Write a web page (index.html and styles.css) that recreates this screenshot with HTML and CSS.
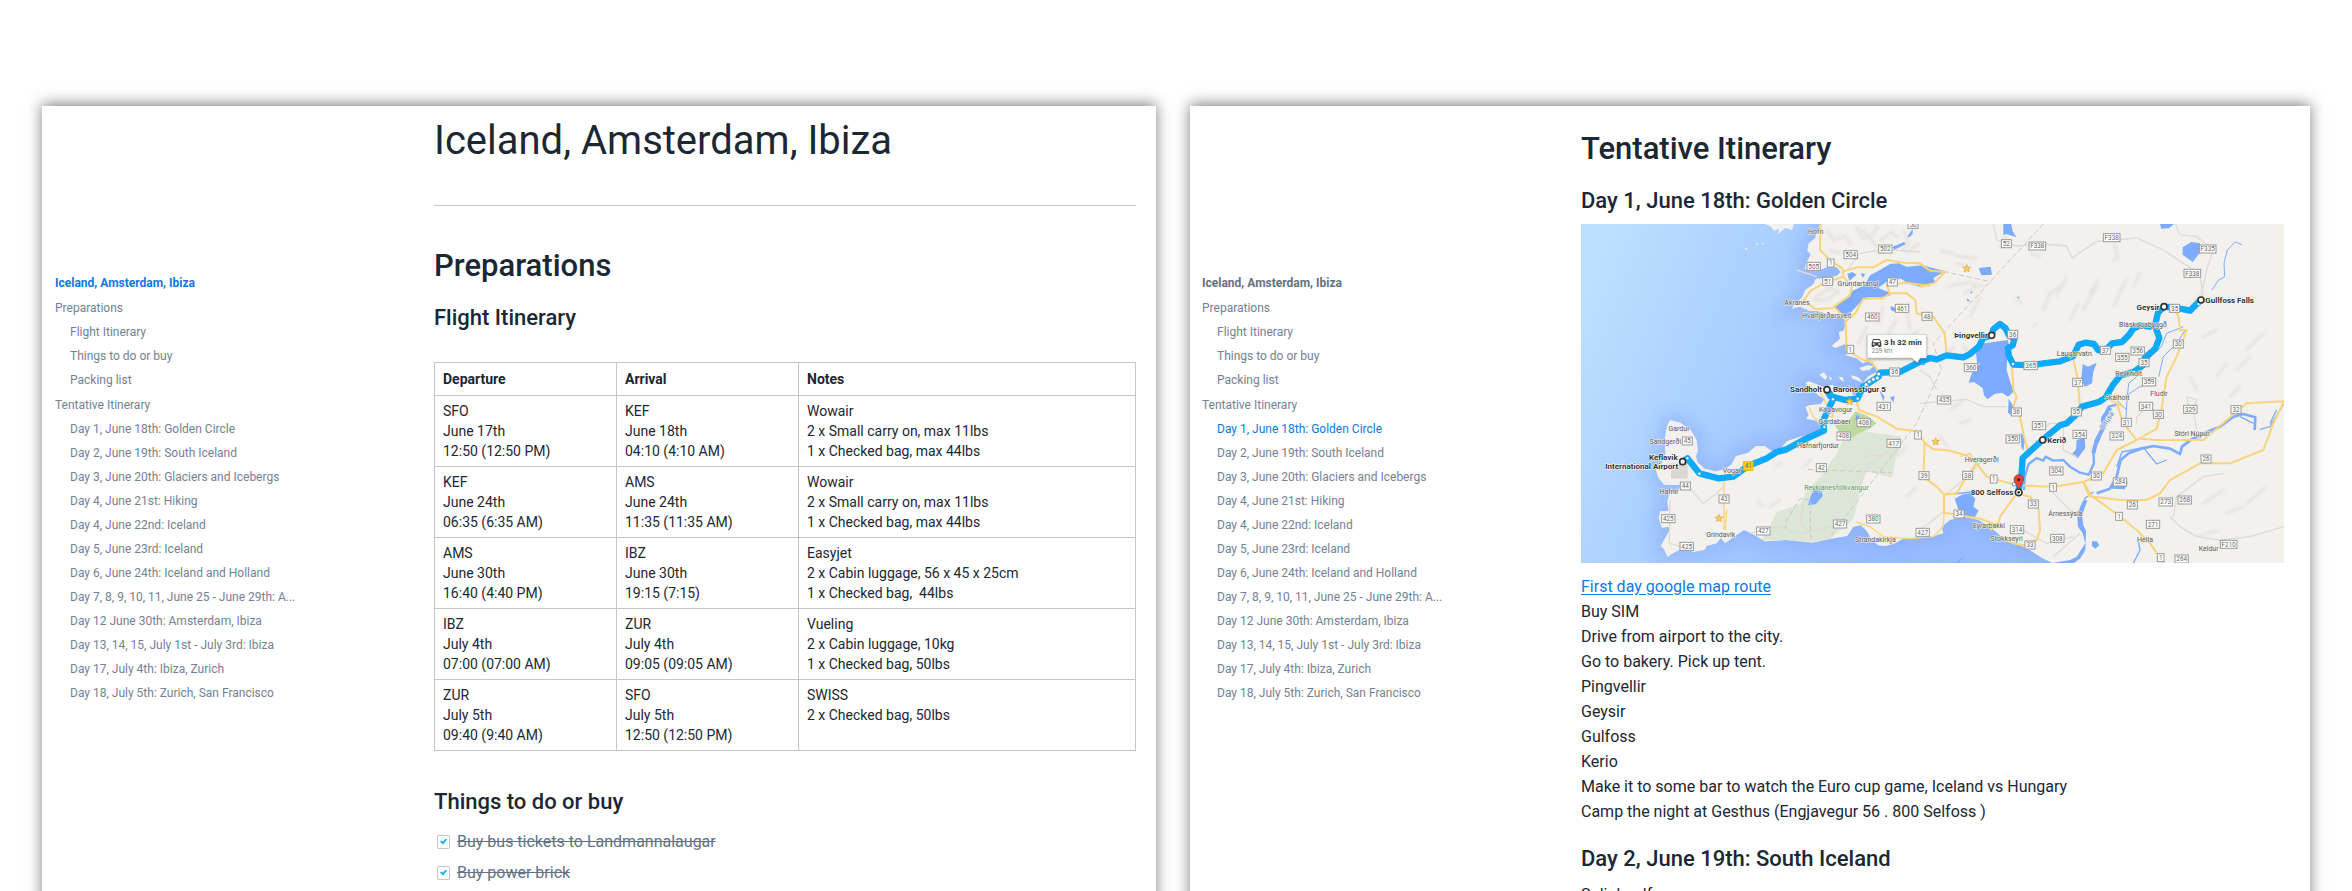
FILE: index.html
```
<!DOCTYPE html>
<html lang="en">
<head>
<meta charset="utf-8">
<meta name="viewport" content="width=device-width, initial-scale=1">
<title>Iceland, Amsterdam, Ibiza</title>
<link rel="stylesheet" href="styles.css">
</head>
<body>
<main class="spread">
  <section class="sheet">
    <nav class="toc" aria-label="Outline of the trip">
      <a class="toc-link toc-title is-active" href="#trip">Iceland, Amsterdam, Ibiza</a>
      <a class="toc-link" href="#preparations">Preparations</a>
      <a class="toc-link toc-sub" href="#flights">Flight Itinerary</a>
      <a class="toc-link toc-sub" href="#todo">Things to do or buy</a>
      <a class="toc-link toc-sub" href="#packing">Packing list</a>
      <a class="toc-link" href="#itinerary">Tentative Itinerary</a>
      <a class="toc-link toc-sub" href="#day1">Day 1, June 18th: Golden Circle</a>
      <a class="toc-link toc-sub" href="#day2">Day 2, June 19th: South Iceland</a>
      <a class="toc-link toc-sub" href="#day3">Day 3, June 20th: Glaciers and Icebergs</a>
      <a class="toc-link toc-sub" href="#day4">Day 4, June 21st: Hiking</a>
      <a class="toc-link toc-sub" href="#day4b">Day 4, June 22nd: Iceland</a>
      <a class="toc-link toc-sub" href="#day5">Day 5, June 23rd: Iceland</a>
      <a class="toc-link toc-sub" href="#day6">Day 6, June 24th: Iceland and Holland</a>
      <a class="toc-link toc-sub" href="#day7">Day 7, 8, 9, 10, 11, June 25 - June 29th: A...</a>
      <a class="toc-link toc-sub" href="#day12">Day 12 June 30th: Amsterdam, Ibiza</a>
      <a class="toc-link toc-sub" href="#day13">Day 13, 14, 15, July 1st - July 3rd: Ibiza</a>
      <a class="toc-link toc-sub" href="#day17">Day 17, July 4th: Ibiza, Zurich</a>
      <a class="toc-link toc-sub" href="#day18">Day 18, July 5th: Zurich, San Francisco</a>
    </nav>
    <article class="doc doc-start">
      <h1 class="doc-title" id="trip">Iceland, Amsterdam, Ibiza</h1>
      <hr class="rule">
      <h2 class="section-title" id="preparations">Preparations</h2>
      <h3 class="sub-title" id="flights">Flight Itinerary</h3>
      <table class="flights">
        <colgroup><col class="col-leg"><col class="col-leg"><col></colgroup>
        <thead>
          <tr><th scope="col">Departure</th><th scope="col">Arrival</th><th scope="col">Notes</th></tr>
        </thead>
        <tbody>
          <tr><td>SFO<br>June 17th<br>12:50 (12:50 PM)</td><td>KEF<br>June 18th<br>04:10 (4:10 AM)</td><td>Wowair<br>2 x Small carry on, max 11lbs<br>1 x Checked bag, max 44lbs</td></tr>
          <tr><td>KEF<br>June 24th<br>06:35 (6:35 AM)</td><td>AMS<br>June 24th<br>11:35 (11:35 AM)</td><td>Wowair<br>2 x Small carry on, max 11lbs<br>1 x Checked bag, max 44lbs</td></tr>
          <tr><td>AMS<br>June 30th<br>16:40 (4:40 PM)</td><td>IBZ<br>June 30th<br>19:15 (7:15)</td><td>Easyjet<br>2 x Cabin luggage, 56 x 45 x 25cm<br>1 x Checked bag, &nbsp;44lbs</td></tr>
          <tr><td>IBZ<br>July 4th<br>07:00 (07:00 AM)</td><td>ZUR<br>July 4th<br>09:05 (09:05 AM)</td><td>Vueling<br>2 x Cabin luggage, 10kg<br>1 x Checked bag, 50lbs</td></tr>
          <tr><td>ZUR<br>July 5th<br>09:40 (9:40 AM)</td><td>SFO<br>July 5th<br>12:50 (12:50 PM)</td><td>SWISS<br>2 x Checked bag, 50lbs</td></tr>
        </tbody>
      </table>
      <h3 class="sub-title todo-title" id="todo">Things to do or buy</h3>
      <ul class="todo">
        <li><label class="task"><input class="task-box" type="checkbox" checked><span class="task-text">Buy bus tickets to Landmannalaugar</span></label></li>
        <li><label class="task"><input class="task-box" type="checkbox" checked><span class="task-text">Buy power brick</span></label></li>
      </ul>
    </article>
  </section>

  <section class="sheet">
    <nav class="toc toc-day" aria-label="Outline of the trip, day 1">
      <a class="toc-link toc-title" href="#trip">Iceland, Amsterdam, Ibiza</a>
      <a class="toc-link" href="#preparations">Preparations</a>
      <a class="toc-link toc-sub" href="#flights">Flight Itinerary</a>
      <a class="toc-link toc-sub" href="#todo">Things to do or buy</a>
      <a class="toc-link toc-sub" href="#packing">Packing list</a>
      <a class="toc-link" href="#itinerary">Tentative Itinerary</a>
      <a class="toc-link toc-sub is-active" href="#day1">Day 1, June 18th: Golden Circle</a>
      <a class="toc-link toc-sub" href="#day2">Day 2, June 19th: South Iceland</a>
      <a class="toc-link toc-sub" href="#day3">Day 3, June 20th: Glaciers and Icebergs</a>
      <a class="toc-link toc-sub" href="#day4">Day 4, June 21st: Hiking</a>
      <a class="toc-link toc-sub" href="#day4b">Day 4, June 22nd: Iceland</a>
      <a class="toc-link toc-sub" href="#day5">Day 5, June 23rd: Iceland</a>
      <a class="toc-link toc-sub" href="#day6">Day 6, June 24th: Iceland and Holland</a>
      <a class="toc-link toc-sub" href="#day7">Day 7, 8, 9, 10, 11, June 25 - June 29th: A...</a>
      <a class="toc-link toc-sub" href="#day12">Day 12 June 30th: Amsterdam, Ibiza</a>
      <a class="toc-link toc-sub" href="#day13">Day 13, 14, 15, July 1st - July 3rd: Ibiza</a>
      <a class="toc-link toc-sub" href="#day17">Day 17, July 4th: Ibiza, Zurich</a>
      <a class="toc-link toc-sub" href="#day18">Day 18, July 5th: Zurich, San Francisco</a>
    </nav>
    <article class="doc doc-day">
      <h2 class="section-title" id="itinerary">Tentative Itinerary</h2>
      <h3 class="sub-title" id="day1">Day 1, June 18th: Golden Circle</h3>
      <svg class="map" viewBox="33 42 2109 1017" role="img" aria-label="Driving route of the Golden Circle">
        <defs>
          <linearGradient id="sea" gradientUnits="userSpaceOnUse" x1="33" y1="300" x2="1000" y2="700">
            <stop offset="0" stop-color="#bbdfff"/><stop offset="0.35" stop-color="#aed2ff"/><stop offset="1" stop-color="#97bbff"/>
          </linearGradient>
          <filter id="shelf" x="-10%" y="-10%" width="120%" height="120%"><feGaussianBlur stdDeviation="26"/></filter>
          <filter id="relief" x="0" y="0" width="100%" height="100%"><feGaussianBlur stdDeviation="4"/></filter>
          <path id="coast" d="M752 42L738 66L736 84L716 100L712 122L722 134L708 160L704 178L712 180L745 182L770 172L800 172L812 186L800 198L760 204L738 206L728 224L706 240L696 262L664 296L690 290L716 302L744 304L780 314L816 322L828 336L820 362L806 366L810 386L784 408L796 414L826 402L832 424L828 436L862 446L878 460L896 452L918 474L926 484L896 498L880 516L890 530L872 548L850 556L838 534L806 548L788 524L760 530L716 514L706 520L726 536L744 556L764 568L752 582L716 586L706 592L716 614L708 626L738 632L760 656L724 672L690 680L650 694L640 706L620 724L604 722L584 708L558 708L534 728L498 738L484 764L462 778L436 784L404 776L382 756L378 738L384 724L380 690L364 662L332 638L300 630L290 650L284 690L286 730L272 768L258 780L264 802L282 824L332 826L322 848L298 850L292 876L296 902L270 904L266 926L276 954L296 950L298 962L272 1008L282 1018L292 1040L316 1026L340 1014L370 1026L404 1020L410 1008L440 1000L452 984L466 1000L492 980L522 960L548 972L584 994L650 990L726 998L776 988L832 978L850 950L872 946L890 962L902 984L924 1006L946 1008L976 1000L998 986L1050 982L1086 980L1120 970L1115 950L1140 930L1180 920L1225 930L1260 950L1300 985L1340 1003L1370 1014L1416 1044L1450 1060H2142V42Z"/>
          <clipPath id="land-clip"><use href="#coast"/></clipPath>
          <path id="drive" d="M338 755L352 745L388 790L446 805L490 800L534 768L590 745L620 726L650 718L700 690L762 662L760 630L790 566L771 539L780 558L825 570L862 566L880 530L926 500L930 488L990 486L1040 460L1080 444L1100 448L1130 436L1180 442L1200 432L1226 410L1240 384L1265 376L1270 358L1290 342L1306 354L1318 378L1334 384L1328 406L1314 414L1316 436L1330 464L1386 466L1420 460L1470 454L1510 438L1526 404L1546 398L1572 402L1584 420L1606 422L1626 400L1656 396L1676 376L1690 356L1710 346L1740 350L1756 342L1764 308L1782 290L1820 294L1860 302L1892 270M1756 350L1768 384L1756 416L1724 444L1722 464L1690 486L1652 496L1628 526L1606 564L1586 576L1536 590L1516 616L1490 640L1470 646L1436 674L1418 690L1358 744L1354 800L1346 838"/>
        </defs>
        <rect x="33" y="42" width="2109" height="1017" fill="url(#sea)"/>
        <use href="#coast" fill="#8aaefa" stroke="#8aaefa" stroke-width="44" opacity=".6" filter="url(#shelf)"/>
        <use href="#coast" fill="#f2f1ee"/>
        <g fill="#f2f1ee">
          <path d="M586 42L602 50L612 62L628 56L622 74L646 54L666 60L672 42Z"/>
          <path d="M521 112l12 4-2 5zM556 100l8 2-3 5zM574 98l9 0-4 6z"/>
          <path d="M748 494l14-7 10 14-6 8zM776 498l10 6-4 8zM806 500l12 2 4 14-10-6zM845 496l20 6 14 16-16-6-18-8zM868 474l24-8 20 2-14 12-22 2z"/>
        </g>

        <!-- hill shading -->
        <g clip-path="url(#land-clip)" fill="none" stroke="#e2e0dc" stroke-width="7" stroke-linecap="round" filter="url(#relief)">
          <path d="M770 60l20 30 34-12 20 24M860 50l18 36 30-10 16-30M930 92l34-26 20 16M780 120l30 10M1000 60l16 40-20 24M1010 130l36-30M880 60l40 50M750 250l30-14 26 8-30 24-36 4M730 270l50-40M940 290l-16 50M980 330l-30 50M1010 300l10 60M890 350l-24 50M1044 360l-20 20"/>
          <path d="M1110 120l60 20 50 4M1130 230l60-12 50 10M1180 250l40-20M1290 110l20-36M1380 130l30 10M1420 300l20-50 30-20M1460 260l30-60M1500 330l26-50M1540 300l40-70M1560 250l24-40M1630 290l40-80M1650 240l20-30M1690 230l20-40M1634 100l8 40M1630 150l14-8M1390 350l12-10M1340 270l16 10M1160 160l40 10M1200 320l30-60M1180 410l20 20M1110 460l40-50M1140 600l40-30M1170 640l30-10M1110 680l24 30M1860 290l40-40M1900 380l40-20M1940 500l30-40M2000 480l40-40M1980 560l30-30M2030 420l50-50M1860 500l20 40"/>
          <path d="M560 870l20 20M600 890l30-20M700 770l24-20M900 770l30-30M1010 860l30-30M620 770l14-14M860 580l20-20M980 740l30-30M1900 880l60-40M1970 910l50-20M2030 880l60-50M1880 980l70-20M1780 880l30-20"/>
        </g>

        <!-- parks -->
        <path fill="#dce6d6" d="M574 990L592 962L620 906L692 882L706 850L760 790L800 730L826 676L880 664L994 680L978 742L966 804L886 782L858 900L848 930L782 986L720 996L650 990Z"/>
        <path fill="#bedaa0" d="M794 646L830 640L856 604L890 616L920 640L902 654L862 672L838 690L812 672Z"/>
        <rect x="303" y="760" width="50" height="46" fill="#ddd5cf"/>

        <!-- lakes and rivers -->
        <g fill="#7dabff">
          <path d="M790 292L824 268L848 242L884 226L900 196L930 180L960 162L986 160L1010 170L1060 166L1080 172L1112 180L1125 184L1090 204L1096 220L1050 230L1010 218L994 206L960 208L924 234L956 246L962 256L930 262L892 262L866 282L846 304L826 326L818 312Z"/>
          <path d="M832 192l14-6 14 8-12 10-10 8zM872 190l6 14 8-12z"/>
          <path d="M1230 402L1314 390L1318 416L1312 436L1310 480L1322 520L1332 544L1314 560L1296 548L1274 552L1252 568L1242 556L1238 534L1212 516L1196 518L1206 488L1222 466L1218 430Z"/>
          <path d="M1300 42h24l4 22 12 18-30-10-10 2zM1226 174l36-4 4 24-32 2zM1838 112l26-16 26 4-2 30-20 26-20-14-10-8zM1770 42h42l-14 12-24 2zM1538 462l16 8 26-12-10 28-4 34-22 10-10-24z"/>
          <path d="M1154 866L1176 854L1200 850L1216 866L1210 890L1226 902L1214 922L1190 922L1164 896Z"/>
          <path d="M730 840L752 832L758 858L738 882L714 886L722 860Z"/>
          <path d="M1520 690l24-6 2 30-22 30-20-10 14-16zM1566 994l14 0 8 12-12 10-10-8zM1640 806l34 10-10 22-40-2zM1316 566l14 22-2 30-14-10zM1352 668l14 14-6 40-6-10z"/>
          <path d="M962 288l16 6-2 12-14-6zM858 616l10 2-2 14-10-2zM928 540l16 20-4 14zM968 110l34-14 6 6-36 18zM1012 80l16-24 0 16-10 10zM960 562l14-4-4 20zM1340 260l8 0-2 8zM1190 264l12 10-10 0zM1200 246l8-2-4 8zM1056 458l12 4-10 6z"/>
          <path d="M1442 1060L1500 1050L1520 1040L1546 1000L1538 970L1524 950L1522 920L1530 890L1542 868L1552 872L1536 916L1540 946L1548 962L1546 1020L1530 1046L1510 1060Z"/>
        </g>
        <g fill="none" stroke="#7dabff" stroke-width="7" stroke-linejoin="round">
          <path d="M1362 840L1364 800L1376 762L1400 744L1420 752L1426 740L1450 752L1480 750L1500 770L1530 788L1556 794L1572 760L1570 720L1586 690L1600 650L1596 630L1616 590L1640 584"/>
          <path stroke-width="12" d="M1570 730L1580 690L1602 650L1600 622L1622 594"/>
          <path stroke-width="3" d="M1674 660L1668 620L1672 560L1676 520L1700 500L1742 440L1774 410L1790 370L1840 350M1664 560L1710 530L1750 520M1766 500L1780 440L1820 400L1846 360M1926 240L1944 212L1964 200L1962 160L1972 120L1996 96L2016 104M1670 600L1620 550L1600 560"/>
          <path stroke-width="8" d="M1580 850L1620 836L1640 800L1652 750L1676 730L1714 716L1750 708L1800 716L1830 732L1836 710L1862 690L1910 666L1950 650L1990 620L2020 612L2056 622L2054 660"/>
          <path stroke-width="4" d="M1640 770L1656 726L1720 712L1760 762L1790 750M2070 658L2100 650L2142 580M1690 1060L1710 1020L1704 990M2010 620L2050 640M1180 1042L1160 1060M1152 852L1204 846M1542 868L1570 846M2100 640L2120 600"/>
        </g>

        <!-- district borders -->
        <g fill="none" stroke="#cbc9c5" stroke-width="3" stroke-dasharray="16 8">
          <path d="M1420 42L1090 400L1114 478L1040 640L780 980M1120 184L1264 216M714 778L966 788M646 960L650 930L690 866L722 870V996"/>
        </g>

        <!-- minor roads -->
        <g fill="none" stroke="#dedbd5" stroke-width="4">
          <path d="M1270 42L1280 90L1340 108L1420 102L1490 108L1506 144L1580 94L1700 84L1780 120L1840 160L1890 190L1900 270M1816 42L1830 74L1880 80L1930 120L1910 180L1894 250M830 182L870 130L940 118L1050 126M1050 580L1190 568L1240 590L1310 590M1200 480L1230 460M346 820L400 880L440 850L460 830M300 870L298 1000L370 1020M1120 860L1190 800L1230 760M1120 906L1050 960M540 970L620 950L700 970L830 940M860 840L900 760L960 720M700 880L690 940L720 970M1410 660L1440 640M1440 640L1480 640L1480 720L1520 740M1440 820L1440 840L1500 900L1530 920M1340 950L1430 1000L1510 980M1450 1040L1530 970M1700 640L1700 620L1740 580M1860 600L1850 560L1880 570L1870 600L1880 660M1800 920L1830 950L1880 980L1950 990L2040 980L2142 950M1810 920L1820 860L1900 800L1960 790M1050 480L1080 500L1100 540M880 740L980 730L1000 690M680 180L740 200"/>
        </g>

        <!-- main roads -->
        <g fill="none" stroke="#fbd37c" stroke-width="6" stroke-linejoin="round">
          <path d="M752 42L750 120L780 150L818 176L820 200L846 230L840 256L792 290L826 326L830 420L880 450L906 456L926 486M820 184L860 172L910 172L950 150L1000 158L1050 160L1080 182M820 200L760 220L720 244L702 270L736 298L790 294M826 336L856 310L880 266L940 264L960 250L1010 250L1036 270L1040 310L1070 320M960 250L950 225L1010 218L1080 228M1080 182L1125 186L1092 220L1050 230M1050 310L1090 320L1124 370L1130 436"/>
          <path d="M860 570L866 600L920 620L980 656L1040 664L1066 700L1090 718L1130 720L1190 736L1220 760L1250 800L1270 806L1340 826L1450 830L1540 816L1554 850L1610 890L1650 920L1700 960L1740 1000L1784 1060"/>
          <path d="M1064 700L1060 800L1100 830L1122 854L1122 908L1170 916L1230 926L1284 946L1260 960M1122 854L1160 850L1190 800L1220 760M1284 946L1290 920L1340 850L1380 860L1406 900L1410 960L1400 990L1360 1006L1330 1000L1284 980"/>
          <path d="M1326 460L1330 540L1340 560L1330 590L1350 620L1362 680L1380 740M1508 440L1522 500L1530 590M1540 816L1600 790L1640 720L1700 690L1760 656L1774 600L1790 500L1820 440L1850 360L1830 360L1826 320L1810 290M1640 580L1660 640L1700 690M1710 686L1760 690L1900 690L2030 580L2142 574M1554 858L1650 870L1730 870L1770 850L1800 810L1890 760L1980 760L2080 720L2110 640L2142 574M1540 816L1560 850M1600 560L1660 590"/>
          <path stroke-width="4" d="M462 810L462 960M470 900L466 960M860 936L900 950L940 980L1020 986L1090 980L1120 950L1122 908M782 590L790 620L760 620M716 590L730 620L760 650M770 540L740 530M750 546L790 620M872 560L920 490M1170 740L1200 730L1210 750"/>
        </g>

        <!-- driving route -->
        <g fill="none" stroke-linejoin="round" stroke-linecap="round">
          <use href="#drive" class="route-edge"/>
          <use href="#drive" class="route-core"/>
        </g>
        <g fill="#fff" stroke="#3a9fe0" stroke-width="3">
          <circle cx="352" cy="745" r="5"/><circle cx="388" cy="791" r="5"/><circle cx="763" cy="651" r="5"/><circle cx="762" cy="630" r="5"/><circle cx="789" cy="568" r="5"/><circle cx="863" cy="566" r="5"/><circle cx="888" cy="524" r="6"/><circle cx="898" cy="515" r="6"/><circle cx="910" cy="508" r="6"/><circle cx="922" cy="504" r="6"/><circle cx="926" cy="492" r="6"/><circle cx="1329" cy="462" r="5"/><circle cx="1692" cy="486" r="5"/><circle cx="1886" cy="282" r="5"/><circle cx="1333" cy="822" r="6"/>
        </g>

        <g id="map-stars"></g>
        <g id="map-shields"></g>
        <g id="map-places"></g>

        <!-- stops -->
        <g fill="#fff" stroke="#333" stroke-width="5">
          <circle cx="338" cy="755" r="9"/><circle cx="771" cy="539" r="9"/><circle cx="1265" cy="376" r="9"/><circle cx="1782" cy="290" r="9"/><circle cx="1893" cy="270" r="9"/><circle cx="1418" cy="690" r="9"/><circle cx="1346" cy="847" r="10"/>
        </g>
        <circle cx="1346" cy="847" r="4" fill="#333"/>
        <path d="M1346 840C1344 826 1332 820 1332 808A14 14 0 0 1 1360 808C1360 820 1348 826 1346 840Z" fill="#ea4335" stroke="#b3261e" stroke-width="2"/>
        <circle cx="1346" cy="809" r="5" fill="#6b130d"/>

        <!-- travel time bubble -->
        <path class="bubble" d="M892 374H1069V444H1050L1042 458L1026 444H892Z"/>
        <path fill="#444" d="M911 387H927Q930 387 931 390L934 399V410H930V411H925V407H913V411H907V410H905V399L908 390Q909 387 911 387ZM911 390L909 397H930L928 390ZM909 400V404H914V400ZM925 400V404H930V400Z" fill-rule="evenodd"/>
        <text class="bubble-time" x="942" y="406">3 h 32 min</text>
        <text class="bubble-km" x="905" y="430">239 km</text>
      </svg>
      <div class="notes">
        <p><a class="route-link" href="#route">First day google map route</a></p>
        <p>Buy SIM</p>
        <p>Drive from airport to the city.</p>
        <p>Go to bakery. Pick up tent.</p>
        <p>Pingvellir</p>
        <p>Geysir</p>
        <p>Gulfoss</p>
        <p>Kerio</p>
        <p>Make it to some bar to watch the Euro cup game, Iceland vs Hungary</p>
        <p>Camp the night at Gesthus (Engjavegur 56 . 800 Selfoss )</p>
      </div>
      <h3 class="sub-title next-day" id="day2">Day 2, June 19th: South Iceland</h3>
      <div class="notes notes-next"><p>Solighoelf</p></div>
    </article>
  </section>
</main>
<script src="map.js"></script>
</body>
</html>
```
FILE: styles.css
```
* { box-sizing: border-box; }

body {
  margin: 0;
  background: #fff;
  color: #1b2733;
  font-family: Roboto, "Liberation Sans", sans-serif;
  font-size: 16px;
  line-height: 25px;
}

h1, h2, h3, p, ul { margin: 0; padding: 0; }

.spread {
  display: grid;
  grid-template-columns: 1114fr 1120fr;
  gap: 34px;
  height: 100vh;
  padding: 106px 42px 0;
  overflow: hidden;
}

.sheet {
  display: grid;
  grid-template-columns: 391px 1fr;
  align-items: start;
  min-height: 100vh;
  background: #fff;
  box-shadow: 0 -2px 14px rgba(0, 0, 0, .5);
}

/* Outline */
.toc {
  display: flex;
  flex-direction: column;
  padding: 165px 0 0 13px;
  font-size: 12px;
  line-height: 24px;
}

.toc-day { padding-left: 12px; }

.toc-link {
  margin-top: 1px;
  color: #738293;
  text-decoration: none;
}

.toc-sub {
  margin-top: 0;
  padding-left: 15px;
}

.toc-title {
  margin-top: 0;
  color: #637282;
  font-weight: 700;
}

.toc-link.is-active { color: #0f78e6; }

/* Document */
.doc-start { padding: 11px 20px 0 1px; }
.doc-day { padding: 23px 26px 0 0; }

.doc-title {
  font-size: 40px;
  font-weight: 400;
  line-height: 48px;
}

.rule {
  margin: 40px 0;
  border: 0;
  border-top: 1px solid #c1c7cd;
}

.section-title {
  margin-bottom: 17px;
  font-size: 31px;
  font-weight: 500;
  line-height: 40px;
}

.sub-title {
  font-size: 22px;
  font-weight: 500;
  line-height: 30px;
}

.flights {
  width: 100%;
  margin: 29px 0 36px;
  border-collapse: collapse;
  table-layout: fixed;
  font-size: 14px;
  line-height: 20px;
}

.col-leg { width: 182px; }

.flights th,
.flights td {
  padding: 5px 8px;
  border: 1px solid #c1c7cd;
  text-align: left;
  vertical-align: top;
}

.flights th { padding: 6px 8px; font-weight: 700; }

.todo { margin-top: 9px; list-style: none; }

.task {
  display: flex;
  align-items: center;
  gap: 7px;
  height: 31px;
  padding-left: 3px;
  color: #637282;
}

.task-text { text-decoration: line-through; }

.task-box {
  display: grid;
  place-items: center;
  width: 13px;
  height: 14px;
  margin: 0;
  border: 1px solid #c1c7cd;
  border-radius: 2px;
  background: #fff;
  appearance: none;
}

.task-box:checked::after {
  content: "";
  width: 7px;
  height: 6px;
  background: #0aaef5;
  clip-path: polygon(0 50%, 18% 32%, 40% 55%, 82% 0, 100% 15%, 44% 100%);
}

/* Day page */
.map {
  display: block;
  width: 100%;
  height: auto;
  margin-top: 8px;
  font-family: Roboto, "Liberation Sans", sans-serif;
}

.route-edge { stroke: #2aa2e6; stroke-width: 19px; }
.route-core { stroke: #0aabff; stroke-width: 16px; }

.shield { fill: #fff; stroke: #999; stroke-width: 3px; }
.shield-text { fill: #666; font-size: 19px; text-anchor: middle; }
.shield-key { fill: #f7cf1b; stroke: #e8bd0a; }
.star { fill: #ffd54a; stroke: #e9953a; stroke-width: 2px; }

.place {
  fill: #5e5b54;
  font-size: 21px;
  text-anchor: middle;
  stroke: #f2f1ee;
  stroke-width: 3px;
  paint-order: stroke;
}

.place-stop { fill: #333; font-size: 24px; font-weight: 700; stroke: #fff; }
.place-park { fill: #5a9a5f; }
.place-river { fill: #5a86c4; }

.bubble {
  fill: #fff;
  stroke: #d0d0d0;
  stroke-width: 2px;
  filter: drop-shadow(0 3px 3px rgba(0, 0, 0, .4));
}

.bubble-time { fill: #333; font-size: 24px; font-weight: 700; }
.bubble-km { fill: #8a8a8a; font-size: 19px; }

.notes { margin-top: 11px; }
.notes-next { margin-top: 8px; }
.route-link { color: #0f78e6; text-underline-offset: 2px; }
.next-day { margin-top: 20px; }
```
FILE: map.js
```
const SVG = 'http://www.w3.org/2000/svg';

// [road number, x, y]
const shields = [
  ['50', 1029, 43], ['502', 946, 117], ['504', 842, 134], ['1', 782, 159], ['505', 731, 169],
  ['51', 773, 214], ['47', 967, 216], ['461', 996, 295], ['460', 907, 321],
  ['1', 841, 418], ['36', 974, 486], ['431', 941, 589], ['408', 881, 638], ['408', 821, 678],
  ['417', 971, 700], ['1', 1044, 675], ['42', 754, 773], ['39', 1062, 797], ['45', 352, 693],
  ['44', 346, 828], ['43', 462, 867], ['425', 295, 926], ['425', 350, 1009], ['427', 580, 963],
  ['427', 810, 942], ['380', 910, 927], ['427', 1058, 967],
  ['52', 1309, 101], ['F338', 1402, 108], ['F338', 1625, 83], ['F335', 1913, 117], ['F338', 1867, 190],
  ['35', 1814, 295], ['48', 1071, 319], ['36', 1328, 373], ['37', 1606, 421], ['355', 1657, 442],
  ['356', 1703, 423], ['35', 1722, 458], ['30', 1825, 402], ['360', 1203, 473], ['365', 1382, 467],
  ['37', 1523, 517], ['359', 1737, 516], ['435', 1122, 570], ['36', 1339, 606], ['35', 1519, 606],
  ['341', 1728, 589], ['30', 1765, 613], ['329', 1861, 598], ['32', 1998, 599], ['31', 1669, 637],
  ['351', 1407, 647], ['354', 1529, 673], ['324', 1640, 678], ['350', 1328, 687], ['26', 1908, 747],
  ['304', 1459, 783], ['38', 1193, 796], ['1', 1271, 807], ['30', 1579, 798], ['284', 1650, 816],
  ['1', 1449, 832], ['33', 1390, 882], ['26', 1687, 885], ['273', 1787, 876], ['268', 1844, 870],
  ['34', 1167, 912], ['1', 1647, 919], ['271', 1749, 943], ['314', 1341, 959], ['308', 1462, 985],
  ['33', 1380, 1005], ['F210', 1976, 1003], ['1', 1772, 1043], ['264', 1835, 1047]
];

// [name, x of the middle, baseline, kind]
const places = [
  ['Hofn', 737, 73], ['Grundartangi', 864, 229], ['Akranes', 681, 285], ['Hvalfjarðarsveit', 770, 323],
  ['Gardur', 327, 662], ['Sandgerði', 286, 701], ['Vogar', 486, 789], ['Hafnir', 297, 852],
  ['Grindavik', 452, 982], ['Kópavogur', 797, 606], ['Gardabaer', 794, 642], ['Hafnarfjordur', 744, 714],
  ['Reykjanesfólkvangur', 799, 839, 'park'], ['Strandakirkja', 916, 995],
  ['Bláskógabyggð', 1719, 352], ['Laugarvatn', 1513, 439], ['Reykholt', 1676, 498], ['Skálholt', 1641, 570],
  ['Fludir', 1767, 559], ['Stóri Núpur', 1866, 677], ['Hveragerði', 1235, 757], ['Árnessýsla', 1486, 919],
  ['Eyrarbakki', 1257, 955], ['Stokkseyri', 1310, 992], ['Hella', 1725, 995], ['Keldur', 1916, 1022],
  ['Keflavik', 280, 750, 'stop'], ['International Airport', 215, 777, 'stop'], ['Sandholt', 708, 547, 'stop'],
  ['Barónsstígur 5', 868, 547, 'stop'], ['Þingvellir', 1203, 384, 'stop'], ['Geysir', 1734, 299, 'stop'],
  ['Gullfoss Falls', 1979, 279, 'stop'], ['Kerið', 1460, 698, 'stop'], ['800 Selfoss', 1266, 855, 'stop']
];

const stars = [[447, 925], [839, 575], [1190, 176], [1097, 695]];

function add(parent, tag, attrs, text) {
  const node = document.createElementNS(SVG, tag);
  for (const key in attrs) node.setAttribute(key, attrs[key]);
  if (text) node.textContent = text;
  parent.append(node);
}

const shieldLayer = document.getElementById('map-shields');
for (const [road, x, y] of shields) {
  const width = 10 + road.length * 10;
  add(shieldLayer, 'rect', { class: 'shield', x: x - width / 2, y: y - 12, width, height: 24 });
  add(shieldLayer, 'text', { class: 'shield-text', x, y: y + 7 }, road);
}
add(shieldLayer, 'rect', { class: 'shield shield-key', x: 520, y: 755, width: 29, height: 26 });
add(shieldLayer, 'text', { class: 'shield-text', x: 535, y: 775 }, '41');

const placeLayer = document.getElementById('map-places');
for (const [name, x, y, kind] of places) {
  add(placeLayer, 'text', { class: kind ? 'place place-' + kind : 'place', x, y }, name);
}
add(placeLayer, 'text', { class: 'place place-river', x: 1610, y: 640, transform: 'rotate(-58 1610 632)' }, 'Ölfusá');

const starLayer = document.getElementById('map-stars');
for (const [x, y] of stars) {
  let points = '';
  for (let i = 0; i < 10; i++) {
    const radius = i % 2 ? 5 : 12;
    const angle = Math.PI * (i / 5 - 0.5);
    points += (x + radius * Math.cos(angle)).toFixed(1) + ',' + (y + radius * Math.sin(angle)).toFixed(1) + ' ';
  }
  add(starLayer, 'polygon', { class: 'star', points });
}
```
